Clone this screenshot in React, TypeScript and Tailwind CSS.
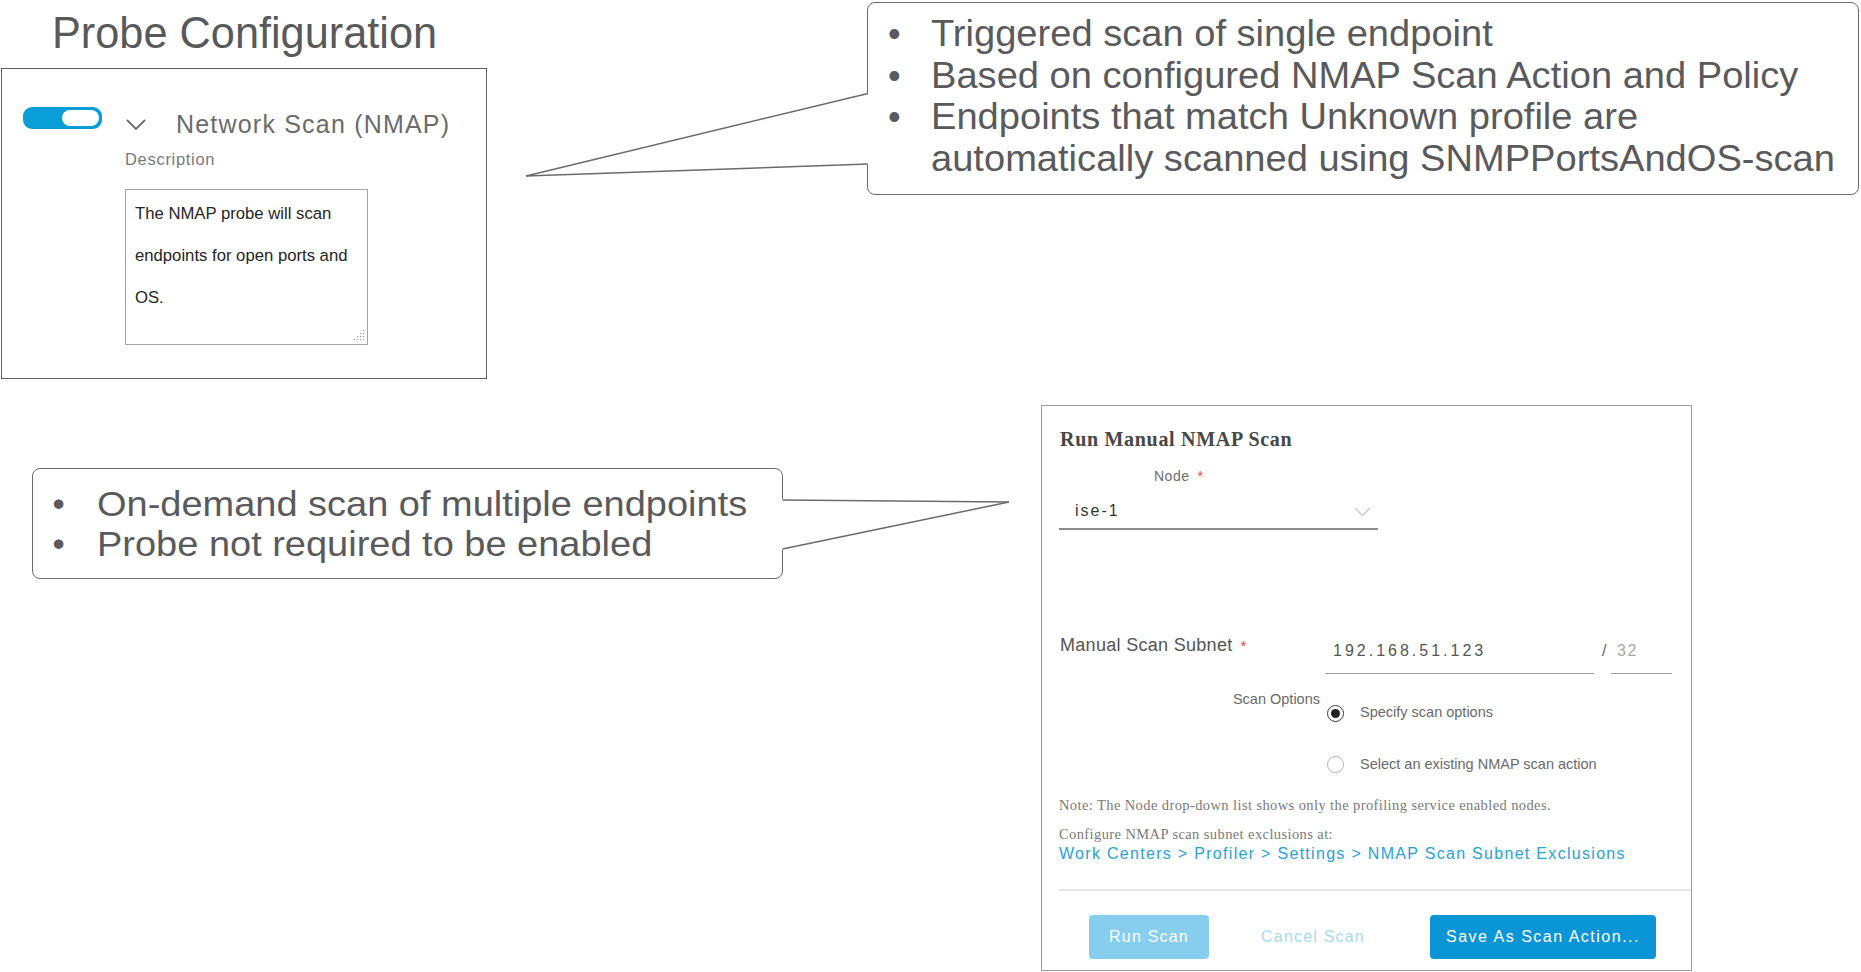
import { FC } from "react";

const sans = "font-['Liberation_Sans',Arial,sans-serif]";
const serif = "font-['Liberation_Serif','Times_New_Roman',serif]";

const TopPointer: FC = () => (
  <svg width="382" height="200" className="relative z-10 -mr-[2px] shrink-0 overflow-visible">
    <polygon points="39,176 382,92.5 382,165" fill="#ffffff" />
    <line x1="39" y1="176" x2="381" y2="93.5" stroke="#6b6b6b" strokeWidth="1.5" />
    <line x1="39" y1="176" x2="381" y2="164" stroke="#6b6b6b" strokeWidth="1.5" />
  </svg>
);

const BottomPointer: FC = () => (
  <svg width="230" height="111" className="relative z-10 -ml-[2px] mt-[63px] shrink-0 overflow-visible">
    <polygon points="0,31 228,34 0,82" fill="#ffffff" />
    <line x1="1.5" y1="32" x2="228" y2="34" stroke="#6b6b6b" strokeWidth="1.5" />
    <line x1="1.5" y1="81" x2="228" y2="34" stroke="#6b6b6b" strokeWidth="1.5" />
  </svg>
);

const ProbeBox: FC = () => (
  <div className="ml-[1px] mt-[9px] w-[486px] h-[311px] border-[1.5px] border-[#5f5f5f] pt-[38px] pl-[21px]">
    <div className="flex items-start">
      <div className="w-[79px] h-[22px] rounded-[9px] bg-[#0a9ed9] p-[3px] flex justify-end">
        <div className="w-[37px] h-[16px] rounded-[8px] bg-white" />
      </div>
      <svg width="20" height="12" className="ml-[24px] mt-[12px] shrink-0">
        <polyline points="1,1 10,10 19,1" fill="none" stroke="#6b6b6b" strokeWidth="1.8" />
      </svg>
      <div className="ml-[30px] mt-[4px] text-[25px] leading-[26px] tracking-[1.2px] text-[#6b6b6b] whitespace-nowrap">
        Network Scan (NMAP)
      </div>
    </div>
    <div className="ml-[102px] mt-[12px] text-[16.5px] leading-[20px] tracking-[0.7px] text-[#7a7a7a]">Description</div>
    <div className="ml-[102px] mt-[20px] w-[243px] h-[156px] border border-[#a3a3a3] pt-[3px] pl-[9px] relative text-[16.7px] leading-[42px] text-[#262626]">
      <div>The NMAP probe will scan</div>
      <div>endpoints for open ports and</div>
      <div>OS.</div>
      <svg width="14" height="14" className="absolute right-[2px] bottom-[2px]">
        {[
          [12, 2],
          [12, 5],
          [9, 5],
          [12, 8],
          [9, 8],
          [6, 8],
          [12, 11],
          [9, 11],
          [6, 11],
          [3, 11],
        ].map(([x, y]) => (
          <rect key={`${x}-${y}`} x={x} y={y} width="1.2" height="1.2" fill="#9a9a9a" />
        ))}
      </svg>
    </div>
  </div>
);

const TopCallout: FC = () => {
  const lines = [
    { bullet: true, text: "Triggered scan of single endpoint" },
    { bullet: true, text: "Based on configured NMAP Scan Action and Policy" },
    { bullet: true, text: "Endpoints that match Unknown profile are" },
    { bullet: false, text: "automatically scanned using SNMPPortsAndOS-scan" },
  ];
  return (
    <div className="mt-[2px] w-[992px] h-[193px] rounded-[8px] border-[1.5px] border-[#6b6b6b] pt-[10px] pl-[20px] text-[36px] leading-[41.7px] text-[#5a5a5c]">
      {lines.map((l) => (
        <div key={l.text} className="flex">
          <span className="w-[42.5px] shrink-0">{l.bullet ? "•" : ""}</span>
          <span className="inline-block origin-left scale-x-[1.058] whitespace-nowrap">{l.text}</span>
        </div>
      ))}
    </div>
  );
};

const BottomCallout: FC = () => (
  <div className="ml-[32px] mt-[63px] w-[751px] h-[111px] shrink-0 rounded-[8px] border-[1.5px] border-[#6b6b6b] pt-[14.5px] pl-[19.5px] text-[35px] leading-[40.5px] text-[#5a5a5c]">
    {["On-demand scan of multiple endpoints", "Probe not required to be enabled"].map((t) => (
      <div key={t} className="flex">
        <span className="w-[44px] shrink-0">•</span>
        <span className="inline-block origin-left scale-x-[1.085] whitespace-nowrap">{t}</span>
      </div>
    ))}
  </div>
);

const Radio: FC<{ checked?: boolean; label: string }> = ({ checked, label }) => (
  <div className="flex items-center h-[24px]">
    <span
      className={
        checked
          ? "w-[17px] h-[17px] rounded-full border-[1.5px] border-[#3a3a3a] flex items-center justify-center"
          : "w-[17px] h-[17px] rounded-full border-[1.5px] border-[#b3b3b3]"
      }
    >
      {checked && <span className="w-[9px] h-[9px] rounded-full bg-[#222]" />}
    </span>
    <span className="ml-[16px] text-[14.5px] text-[#6a6a6a] whitespace-nowrap">{label}</span>
  </div>
);

const NmapPanel: FC = () => (
  <div className="ml-[30px] w-[651px] h-[566px] shrink-0 border border-[#9b9b9b] pt-[21px] pl-[17px]">
    <div className={`${serif} ml-[1px] text-[20px] leading-[24px] tracking-[0.7px] font-bold text-[#474747]`}>
      Run Manual NMAP Scan
    </div>
    <div className="ml-[95px] mt-[16px] text-[14px] leading-[18px] tracking-[0.5px] text-[#6e6e6e]">
      Node<span className="ml-[8px] text-[#e0453a]">*</span>
    </div>
    <div className="mt-[16px] w-[319px] flex items-start justify-between border-b-2 border-[#8c8c8c] pb-[7px] pl-[16px]">
      <span className="text-[16px] leading-[20px] tracking-[2px] text-[#333]">ise-1</span>
      <svg width="17" height="10" className="mr-[7px] mt-[6px]">
        <polyline points="1,1 8.5,8.5 16,1" fill="none" stroke="#c4c4c4" strokeWidth="1.2" />
      </svg>
    </div>

    <div className="mt-[104px] flex items-start">
      <div className="ml-[1px] w-[265px] text-[18px] leading-[22px] tracking-[0.3px] text-[#555]">
        Manual Scan Subnet<span className="ml-[8px] text-[#e0453a] text-[15px]">*</span>
      </div>
      <div className="mt-[7px] w-[269px] border-b-[1.5px] border-[#9d9d9d] pl-[8px] pb-[12px] text-[16px] leading-[20px] tracking-[3px] text-[#555]">
        192.168.51.123
      </div>
      <span className="mt-[7px] ml-[8px] w-[9px] text-[16px] leading-[20px] text-[#666]">/</span>
      <div className="mt-[7px] w-[61px] border-b-[1.5px] border-[#9d9d9d] pl-[6px] pb-[12px] text-[16px] leading-[20px] tracking-[1.5px] text-[#a8a8a8]">
        32
      </div>
    </div>

    <div className="mt-[15px] flex items-start">
      <div className="mt-[1px] w-[261px] text-right text-[14.5px] leading-[18px] text-[#6a6a6a]">Scan Options</div>
      <div className="ml-[7px] flex flex-col gap-[27.5px]">
        <div className="mt-[12px]">
          <Radio checked label="Specify scan options" />
        </div>
        <Radio label="Select an existing NMAP scan action" />
      </div>
    </div>

    <div className={`${serif} mt-[19px] text-[14.5px] leading-[18px] tracking-[0.4px] text-[#7a7a7a] whitespace-nowrap`}>
      Note: The Node drop-down list shows only the profiling service enabled nodes.
    </div>
    <div className={`${serif} mt-[11px] text-[14.5px] leading-[18px] tracking-[0.4px] text-[#7a7a7a]`}>
      Configure NMAP scan subnet exclusions at:
    </div>
    <div className="mt-[1px] text-[16px] leading-[20px] tracking-[1.3px] text-[#28a2d8] whitespace-nowrap">
      Work Centers &gt; Profiler &gt; Settings &gt; NMAP Scan Subnet Exclusions
    </div>

    <div className="mt-[25px] h-[2px] bg-[#e8e8e8]" />

    <div className="mt-[24px] pl-[30px] flex items-center">
      <button className="w-[120px] h-[44px] rounded-[4px] bg-[#86cdee] text-white text-[16px] tracking-[1.2px]">Run Scan</button>
      <button className="ml-[20px] w-[168px] h-[44px] text-[#a7dbf1] text-[16px] tracking-[1.2px]">Cancel Scan</button>
      <button className="ml-[33px] w-[226px] h-[44px] rounded-[4px] bg-[#0a96d6] text-white text-[16px] tracking-[1.5px]">
        Save As Scan Action...
      </button>
    </div>
  </div>
);

const App: FC = () => {
  return (
    <div className={`${sans} w-[1861px] h-[972px] bg-white overflow-hidden`}>
      {/* Top row: probe configuration + triggered scan callout */}
      <div className="h-[405px] flex items-start">
        <div className="w-[487px] shrink-0">
          <div className="pl-[52px] pt-[7px] text-[45px] leading-[52px] text-[#58595b]">
            <span className="inline-block origin-left scale-x-[0.962] whitespace-nowrap">Probe Configuration</span>
          </div>
          <ProbeBox />
        </div>
        <TopPointer />
        <TopCallout />
      </div>

      {/* Bottom row: on-demand callout + manual scan panel */}
      <div className="flex items-start">
        <BottomCallout />
        <BottomPointer />
        <NmapPanel />
      </div>
    </div>
  );
};

export default App;
